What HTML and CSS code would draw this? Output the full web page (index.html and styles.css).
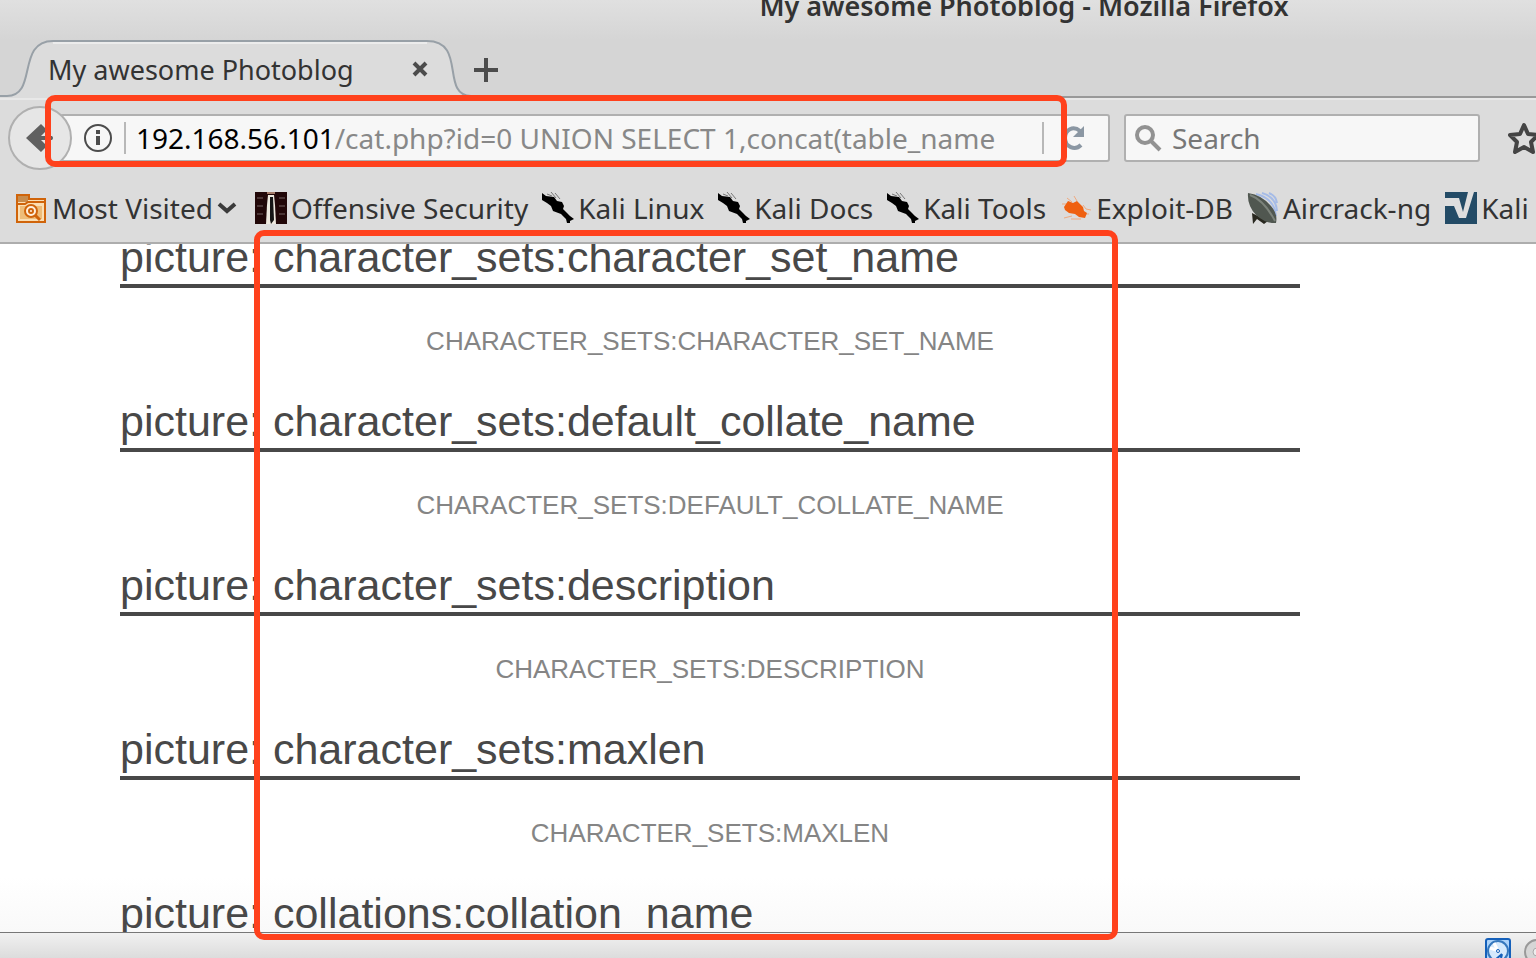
FILE: index.html
```html
<!DOCTYPE html>
<html lang="en">
<head>
<meta charset="utf-8">
<title>My awesome Photoblog - Mozilla Firefox</title>
<link rel="stylesheet" href="styles.css">
</head>
<body>
<svg class="defs" aria-hidden="true">
  <symbol id="dragon" viewBox="0 0 32 32">
    <path d="M0 1l4 3 8 1 3 4 5 1 2 4-1 3 4 4 3 3 4 3-4 2v2h-3l-1-4-5-5-8-3-2-5-4-3-5-3z" fill="#000"/>
    <path d="M5 2l5 2M9 0l5 6M13 1l5 6" stroke="#777" stroke-width="1" fill="none"/>
  </symbol>
</svg>
<header class="chrome">
  <div class="titlebar">My awesome Photoblog - Mozilla Firefox</div>
  <div class="tabs">
    <div class="tab">
      <svg class="tab-shape" viewBox="0 0 480 58" aria-hidden="true">
        <path d="M0 58V56H7C38 56 16 1 53 1H427C467 1 440 55 471 56H480V58z" fill="#dcdcdc"/>
        <path d="M0 56H7C38 56 16 1 53 1H427C467 1 440 55 471 56H480" fill="none" stroke="#98a0a7" stroke-width="2"/>
        <path d="M53 3H427" stroke="#ececec" stroke-width="2"/>
      </svg>
      <span class="tab-title">My awesome Photoblog</span>
      <button class="icon-button tab-close" aria-label="Close tab"><svg width="16" height="16" viewBox="0 0 16 16"><path d="M2 2l12 12M14 2L2 14" stroke="#4c4c4c" stroke-width="4"/></svg></button>
    </div>
    <button class="icon-button tab-new" aria-label="New tab"><svg width="24" height="24" viewBox="0 0 24 24"><path d="M12 0v24M0 12h24" stroke="#4c4c4c" stroke-width="4"/></svg></button>
  </div>
  <div class="nav">
    <button class="icon-button back" aria-label="Back"><svg width="30" height="30" viewBox="0 0 30 30"><path d="M1 15L16 1l4 4v4l-4 4h11q2 2 0 4H16l4 4v4l-4 4z" fill="#606060"/></svg></button>
    <div class="urlbar">
      <svg width="28" height="28" viewBox="0 0 28 28"><circle cx="14" cy="14" r="13" fill="none" stroke="#4c4c4c" stroke-width="2"/><path d="M14 6v4M14 12v9" stroke="#4c4c4c" stroke-width="4"/></svg>
      <i class="rule"></i>
      <label class="host" for="url">192.168.56.101</label>
      <input id="url" class="url" type="text" value="/cat.php?id=0 UNION SELECT 1,concat(table_name">
      <i class="rule"></i>
      <button class="icon-button reload" aria-label="Reload"><svg width="24" height="26" viewBox="0 0 24 26"><path d="M18 6C11 0 3 5 3 13c0 9 10 13 16 7" fill="none" stroke="#8b97a3" stroke-width="4"/><path d="M22 1v11H11z" fill="#8b97a3"/></svg></button>
    </div>
    <div class="search">
      <svg width="28" height="28" viewBox="0 0 28 28"><circle cx="11" cy="11" r="8" fill="none" stroke="#929292" stroke-width="4"/><path d="M17 17l9 9" stroke="#929292" stroke-width="4"/></svg>
      <input class="query" type="search" placeholder="Search" aria-label="Search">
    </div>
    <button class="icon-button star" aria-label="Bookmark this page"><svg width="32" height="32" viewBox="0 0 32 32"><path d="M16 3l4 9 10 1-7 7 2 10-9-5-9 5 2-10-7-7 10-1z" fill="none" stroke="#444" stroke-width="4" stroke-linejoin="round"/></svg></button>
  </div>
  <nav class="bookmarks">
    <a class="folder" href="#most"><svg width="32" height="32" viewBox="0 0 32 32"><path d="M1 3h12v4h16v23H1z" fill="#fbdfb4" stroke="#d0640a" stroke-width="2"/><path d="M2 4h10v6H2z" fill="#c98c4b"/><path d="M1 12h8l3-2h17" fill="none" stroke="#d0640a" stroke-width="2"/><path d="M4 14h22v13H4z" fill="#eebd79"/><circle cx="15" cy="19" r="6" fill="#fff0dc" stroke="#d0640a" stroke-width="2"/><circle cx="15" cy="19" r="2" fill="none" stroke="#d0640a" stroke-width="2"/><path d="M19 23l5 5" stroke="#d0640a" stroke-width="3"/></svg>Most Visited<svg width="20" height="14" viewBox="0 0 20 14"><path d="M2 3l8 7 8-7" fill="none" stroke="#3b3b3b" stroke-width="4"/></svg></a>
    <a href="#offsec"><svg width="32" height="32" viewBox="0 0 32 32"><path d="M0 0h32v32H0z" fill="#210708"/><path d="M2 6h6M2 14h6M2 22h6M24 6h6M24 14h6M24 22h6" stroke="#4a3535" stroke-width="2"/><path d="M13 3h6l1 10 1 19H11l1-19z" fill="#eee9df"/><path d="M15 5h3l1 23-3 4-1-4z" fill="#151515"/><path d="M12 1h8" stroke="#a47b69" stroke-width="2"/></svg>Offensive Security</a>
    <a href="#kali"><svg width="32" height="32"><use href="#dragon"/></svg>Kali Linux</a>
    <a href="#docs"><svg width="32" height="32"><use href="#dragon"/></svg>Kali Docs</a>
    <a href="#tools"><svg width="32" height="32"><use href="#dragon"/></svg>Kali Tools</a>
    <a href="#edb"><svg width="32" height="32" viewBox="0 0 32 32"><path d="M7 6l5 4M14 4l3 5M2 12h5M4 26l8-2M11 27h10M23 13l3 4 5 1M25 22h4" stroke="#efaa80" stroke-width="1" fill="none"/><path d="M4 15l4-6 5 2 4-2 6 6 1 4 3 2-2 5-6-1-4-3-6-1-4-3z" fill="#ef6010"/></svg>Exploit-DB</a>
    <a href="#air"><svg width="32" height="32" viewBox="0 0 32 32"><path d="M9 2Q27 6 29 24M15 1q14 4 15 18M22 1q7 3 8 10" fill="none" stroke="#a5bbe6" stroke-width="2"/><path d="M5 21l1 11 4-5 7 5 4-3z" fill="#292820"/><path d="M1 1q14 2 23 13 7 8 5 17-10 1-20-8Q0 13 1 1z" fill="#505750"/><path d="M3 3q14 5 25 26" fill="none" stroke="#7c837b" stroke-width="2"/></svg>Aircrack-ng</a>
    <a href="#ng"><svg width="32" height="32" viewBox="0 0 32 32"><path d="M0 0h32v32H0z" fill="#234b66"/><path d="M0 6h14l4 14 5-20h6l-8 26h-7L9 14H0z" fill="#dedede"/></svg>Kali</a>
  </nav>
</header>
<main class="page">
  <div class="pictures">
    <article><h2>picture: character_sets:character_set_name</h2><p>character_sets:character_set_name</p></article>
    <article><h2>picture: character_sets:default_collate_name</h2><p>character_sets:default_collate_name</p></article>
    <article><h2>picture: character_sets:description</h2><p>character_sets:description</p></article>
    <article><h2>picture: character_sets:maxlen</h2><p>character_sets:maxlen</p></article>
    <article><h2>picture: collations:collation_name</h2></article>
  </div>
</main>
<footer class="status">
  <svg width="26" height="26" viewBox="0 0 26 26"><rect x="1" y="1" width="24" height="28" rx="2" fill="#acd3fa" stroke="#1560ba" stroke-width="2"/><circle cx="13" cy="13" r="10" fill="#d5e9fc" stroke="#3678bd" stroke-width="2"/><path d="M5 10l6 2M9 5l3 6" stroke="#fff" stroke-width="3"/><circle cx="13" cy="13" r="1.500" fill="#fff" stroke="#1560ba"/><path d="M17 16l-7 6-2 4M17 16l-2 9" fill="none" stroke="#1560ba" stroke-width="2"/></svg>
  <svg width="26" height="26" viewBox="0 0 26 26"><circle cx="14" cy="14" r="12" fill="#d6d6d6" stroke="#999" stroke-width="2"/><circle cx="14" cy="14" r="4" fill="#eee" stroke="#aaa"/></svg>
</footer>
<div class="mark mark-url"></div>
<div class="mark mark-results"></div>
</body>
</html>
```
FILE: styles.css
```css
* { box-sizing: border-box; }
body {
  margin: 0;
  height: 100vh;
  display: flex;
  flex-direction: column;
  overflow: hidden;
  position: relative;
  background: #fff;
  color: #333;
  font-family: "Noto Sans", "Open Sans", sans-serif;
  font-size: 28px;
}
.defs { position: absolute; width: 0; height: 0; }
svg { flex: none; display: block; }
.icon-button {
  border: 0;
  padding: 0;
  background: none;
  display: flex;
  align-items: center;
  justify-content: center;
  flex: none;
}
.chrome {
  flex: none;
  background: #dcdcdc;
  border-bottom: 2px solid #adadad;
}
.titlebar {
  height: 40px;
  padding-left: 512px;
  line-height: 12px;
  text-align: center;
  font-weight: 600;
  font-size: 27px;
  white-space: nowrap;
  background: linear-gradient(#e0e0e0, #d5d5d5);
}
.tabs {
  height: 58px;
  display: flex;
  background: #d5d5d5;
  border-bottom: 2px solid #999;
}
.tab {
  position: relative;
  width: 472px;
  height: 58px;
  padding-left: 48px;
  display: flex;
  align-items: center;
}
.tab-shape { position: absolute; left: 0; top: 0; width: 480px; height: 58px; }
.tab-title { position: relative; width: 364px; font-size: 27px; white-space: nowrap; }
.tab-close { position: relative; }
.tab-new { height: 60px; margin-left: 2px; position: relative; }
.nav {
  height: 78px;
  display: flex;
  align-items: center;
  padding-left: 8px;
  border-top: 2px solid #e8e8e8;
  overflow: hidden;
}
.back {
  width: 64px;
  height: 64px;
  border: 2px solid #b0b0b0;
  border-radius: 50%;
  background: #e6e6e6;
  position: relative;
  z-index: 1;
}
.urlbar, .search {
  height: 48px;
  display: flex;
  align-items: center;
  background: #f7f7f7;
  border: 2px solid #b0b0b0;
  border-radius: 3px;
}
.urlbar {
  flex: 1;
  min-width: 0;
  margin-left: -12px;
  padding: 0 22px;
}
.rule { flex: none; width: 2px; height: 32px; margin: 0 10px 0 12px; background: #b8b8b8; }
.host { color: #000; }
input {
  border: 0;
  padding: 0;
  min-width: 0;
  outline: 0;
  background: none;
  font: inherit;
}
.url { flex: 1; margin-right: 34px; color: #888; }
.reload { margin-left: 8px; }
.search {
  flex: none;
  width: 356px;
  margin-left: 14px;
  padding: 0 8px;
  gap: 10px;
}
.query { flex: 1; }
.query::placeholder { color: #777; opacity: 1; }
.star { margin: 0 -4px 0 28px; }
.bookmarks {
  height: 66px;
  padding: 0 0 2px 16px;
  display: flex;
  align-items: center;
  gap: 14px;
  overflow: hidden;
}
.bookmarks a {
  flex: none;
  display: flex;
  align-items: center;
  gap: 4px;
  color: #333;
  text-decoration: none;
  white-space: nowrap;
}
.bookmarks .folder { margin-right: 4px; }
.page {
  flex: 1;
  min-height: 0;
  overflow: hidden;
  padding: 0 236px 0 120px;
  background: linear-gradient(#fff 92%, #f9f9f9);
  font-family: "Liberation Sans", Arial, sans-serif;
}
.pictures { margin-top: -14px; }
h2 {
  margin: 0;
  border-bottom: 4px solid #484848;
  color: #484848;
  font-size: 43px;
  font-weight: 400;
  line-height: 54px;
  white-space: nowrap;
}
p {
  margin: 0;
  padding: 38px 0;
  color: #858585;
  font-size: 26px;
  line-height: 30px;
  text-align: center;
  text-transform: uppercase;
}
.status {
  flex: none;
  height: 26px;
  padding: 5px 0 0;
  display: flex;
  justify-content: flex-end;
  gap: 12px;
  overflow: hidden;
  border-top: 1px solid #777;
  background: linear-gradient(#f1f1f1, #dcdcdc);
}
.status svg:last-child { margin-right: -13px; }
.mark {
  position: absolute;
  border: 6px solid #ff411c;
  border-radius: 10px;
  pointer-events: none;
  z-index: 2;
}
.mark-url { left: 45px; top: 95px; right: 469px; height: 72px; }
.mark-results { left: 254px; top: 230px; right: 418px; bottom: 18px; }
```
